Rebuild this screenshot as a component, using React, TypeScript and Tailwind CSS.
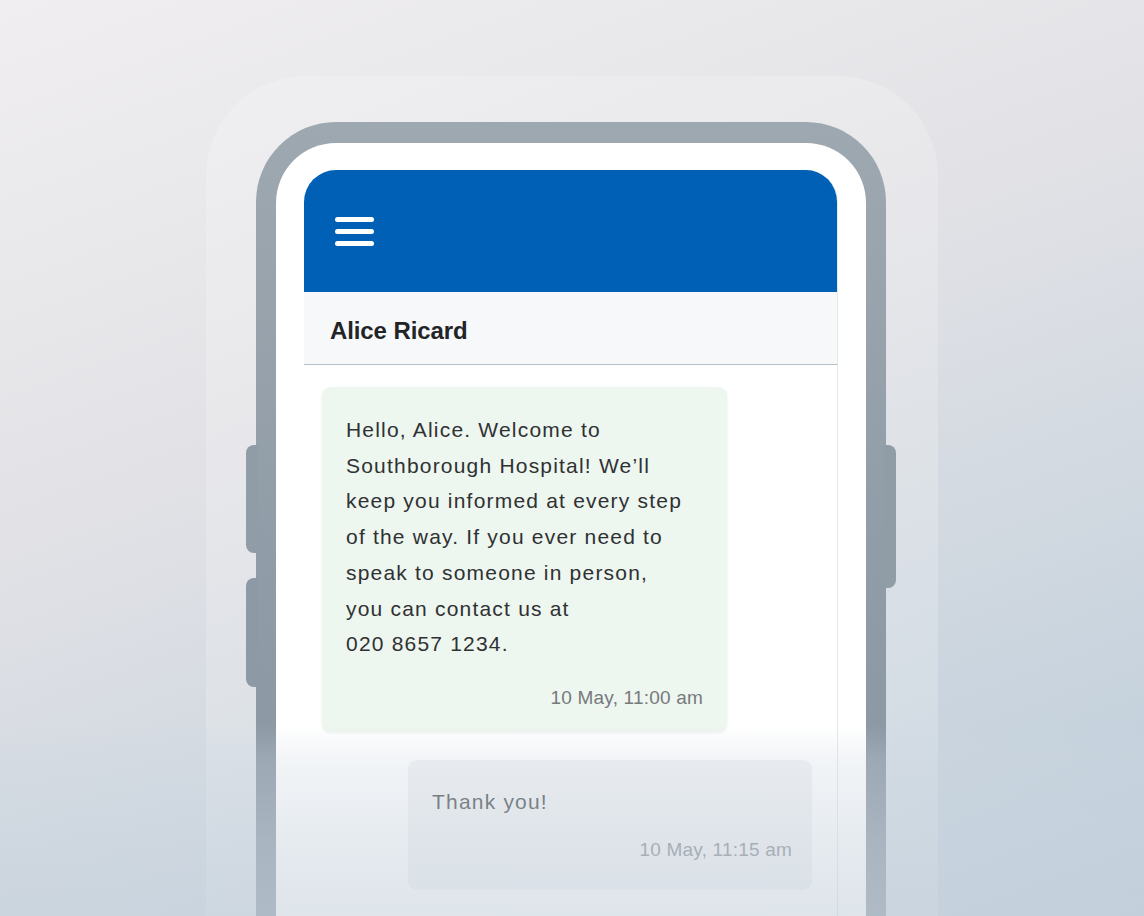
import React from "react";

export default function App() {
  const font = { fontFamily: '"Liberation Sans", Arial, sans-serif' };
  return (
    <div
      className="relative h-[916px] w-full overflow-hidden flex justify-center bg-[linear-gradient(160deg,#f0eef0_0%,#e2e2e6_40%,#c9d4de_80%,#bccbd8_100%)]"
      style={font}
    >
      <div className="mt-[76px] w-[732px] h-[900px] flex-none rounded-t-[100px] bg-white/20 px-[50px] pt-[46px]">
        <div className="relative w-[630px] h-[860px] rounded-t-[80px] bg-[linear-gradient(180deg,#9ea8b0_0%,#909ca7_50%,#8794a0_100%)] px-[20px] pt-[21px]">
          {/* side buttons */}
          <div className="absolute left-[-10px] top-[323px] h-[108px] w-[12px] rounded-l-[8px] bg-[#909ca6]" />
          <div className="absolute left-[-10px] top-[456px] h-[109px] w-[12px] rounded-l-[8px] bg-[#8d99a4]" />
          <div className="absolute right-[-10px] top-[323px] h-[143px] w-[12px] rounded-r-[8px] bg-[#909ca6]" />

          <div className="h-full rounded-t-[60px] bg-white px-[28px] pt-[27px]">
            <div className="h-full rounded-t-[32px] overflow-hidden border-r border-[#e4e7ea] bg-white">
              {/* blue header */}
              <div className="h-[122px] bg-[#0060b6] flex items-center pl-[31px]">
                <div className="flex flex-col gap-[7px]">
                  <div className="h-[5px] w-[39px] rounded-full bg-white" />
                  <div className="h-[5px] w-[39px] rounded-full bg-white" />
                  <div className="h-[5px] w-[39px] rounded-full bg-white" />
                </div>
              </div>
              {/* name bar */}
              <div className="h-[73px] bg-[#f7f8fa] border-b border-[#b8c0c7] flex items-center pl-[26px] pt-[5px]">
                <span className="text-[24px] font-bold text-[#222426] tracking-[-0.1px]">Alice Ricard</span>
              </div>
              {/* messages */}
              <div className="flex flex-col pt-[22px]">
                <div className="ml-[18px] w-[405px] rounded-[9px] bg-[#edf6ef] shadow-[0_1px_3px_rgba(0,0,0,0.08)] pl-[24px] pr-[24px] pt-[25px] pb-[20px]">
                  <p className="text-[21px] leading-[35.7px] tracking-[1.2px] text-[#2f3133]">
                    Hello, Alice. Welcome to
                    <br />
                    Southborough Hospital! We’ll
                    <br />
                    keep you informed at every step
                    <br />
                    of the way. If you ever need to
                    <br />
                    speak to someone in person,
                    <br />
                    you can contact us at
                    <br />
                    020 8657 1234.
                  </p>
                  <p className="mt-[22px] text-right text-[19px] leading-[28px] tracking-[0.2px] text-[#777a7c]">
                    10 May, 11:00 am
                  </p>
                </div>
                <div className="mt-[28px] ml-[104px] w-[404px] rounded-[9px] bg-[#f1f2f4] pl-[24px] pr-[20px] pt-[24px] pb-[26px]">
                  <p className="text-[21px] leading-[36px] tracking-[1.2px] text-[#4a4d50]">Thank you!</p>
                  <p className="mt-[16px] text-right text-[19px] leading-[28px] tracking-[0.2px] text-[#85898d]">
                    10 May, 11:15 am
                  </p>
                </div>
              </div>
            </div>
          </div>
        </div>
      </div>
      {/* bottom fade overlay */}
      <div className="pointer-events-none absolute left-0 right-0 bottom-0 h-[192px] bg-[linear-gradient(180deg,rgba(205,215,225,0)_0%,rgba(205,215,225,0.25)_18%,rgba(202,213,223,0.48)_60%,rgba(200,211,221,0.6)_100%)]" />
    </div>
  );
}
